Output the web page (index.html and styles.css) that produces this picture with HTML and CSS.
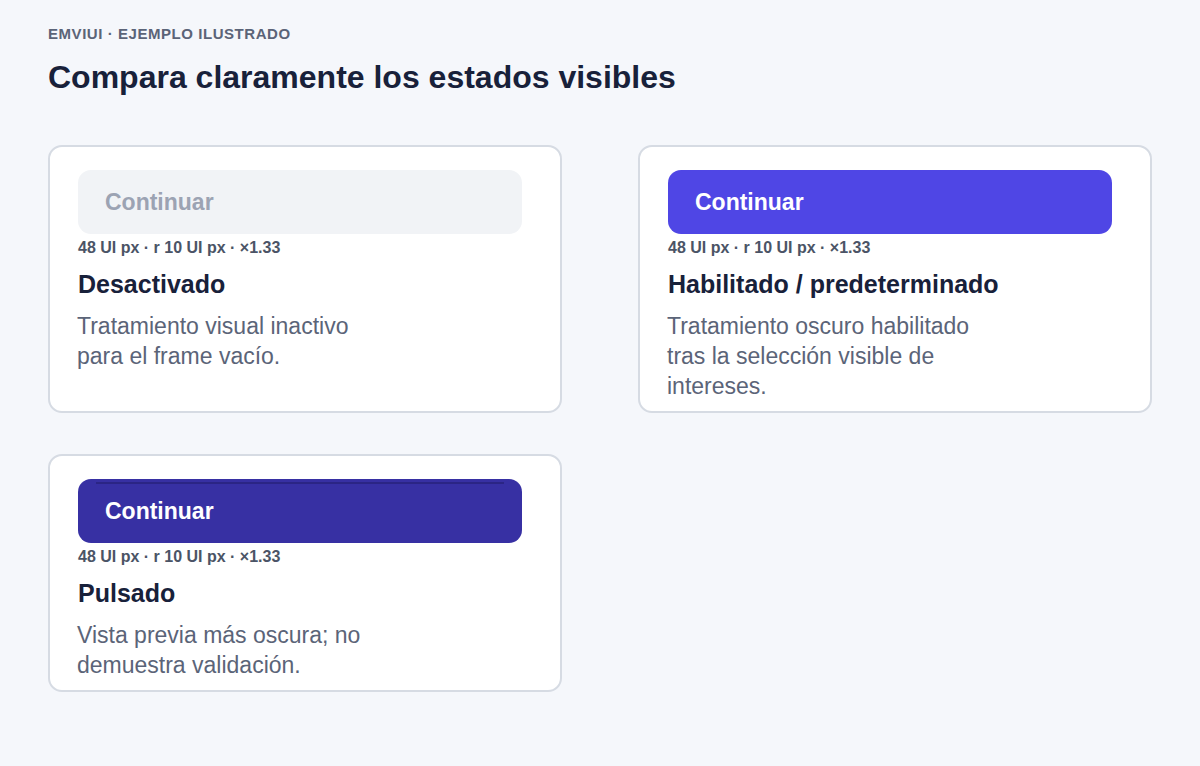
FILE: index.html
```html
<!DOCTYPE html>
<html lang="es">
<head>
<meta charset="utf-8">
<title>EMVIUI · Ejemplo ilustrado</title>
<link rel="stylesheet" href="styles.css">
</head>
<body>
<main class="page">
  <header class="head">
    <div class="eyebrow">EMVIUI · EJEMPLO ILUSTRADO</div>
    <h1 class="title">Compara claramente los estados visibles</h1>
  </header>
  <section class="grid">
    <article class="card">
      <div class="btn btn-disabled">Continuar</div>
      <div class="meta">48 UI px · r 10 UI px · ×1.33</div>
      <h2 class="name">Desactivado</h2>
      <p class="desc">Tratamiento visual inactivo para el frame vacío.</p>
    </article>
    <article class="card">
      <div class="btn btn-enabled">Continuar</div>
      <div class="meta">48 UI px · r 10 UI px · ×1.33</div>
      <h2 class="name">Habilitado / predeterminado</h2>
      <p class="desc">Tratamiento oscuro habilitado tras la selección visible de intereses.</p>
    </article>
    <article class="card">
      <div class="btn btn-pressed">Continuar</div>
      <div class="meta">48 UI px · r 10 UI px · ×1.33</div>
      <h2 class="name">Pulsado</h2>
      <p class="desc">Vista previa más oscura; no demuestra validación.</p>
    </article>
  </section>
</main>
</body>
</html>
```
FILE: styles.css
```css
* { box-sizing: border-box; }
html, body { margin: 0; padding: 0; }
body {
  background: #f5f7fb;
  font-family: "Liberation Sans", Arial, sans-serif;
  color: #18213a;
}
.page {
  width: 1200px;
  padding: 24px 48px;
}
.eyebrow {
  font-size: 15px;
  line-height: 20px;
  font-weight: 700;
  letter-spacing: 0.55px;
  color: #5b6478;
}
.title {
  margin: 15px 0 0;
  font-size: 32px;
  line-height: 36px;
  font-weight: 700;
  color: #18213a;
}
.grid {
  margin-top: 50px;
  display: grid;
  grid-template-columns: 514px 514px;
  column-gap: 76px;
  row-gap: 41px;
  align-items: stretch;
}
.card {
  background: #ffffff;
  border: 2px solid #d6dbe3;
  border-radius: 14px;
  padding: 23px 28px 10px;
}
.btn {
  position: relative;
  width: 444px;
  height: 64px;
  border-radius: 13px;
  padding-left: 27px;
  display: flex;
  align-items: center;
  font-size: 23px;
  font-weight: 700;
}
.btn-disabled { background: #f1f3f6; color: #9ca3b3; }
.btn-enabled { background: #4f46e5; color: #ffffff; }
.btn-pressed { background: #3730a3; color: #ffffff; }
.btn-pressed::before {
  content: "";
  position: absolute;
  left: 18px;
  right: 18px;
  top: 3px;
  height: 2px;
  background: #2b2585;
}
.meta {
  margin-top: 5px;
  font-size: 16px;
  line-height: 18px;
  font-weight: 700;
  color: #4b5466;
}
.name {
  margin: 13px 0 0;
  font-size: 25px;
  line-height: 28px;
  font-weight: 700;
  color: #18213a;
}
.desc {
  margin: 13px 0 0 -1px;
  max-width: 312px;
  font-size: 23px;
  line-height: 30px;
  color: #5b6478;
}
```
